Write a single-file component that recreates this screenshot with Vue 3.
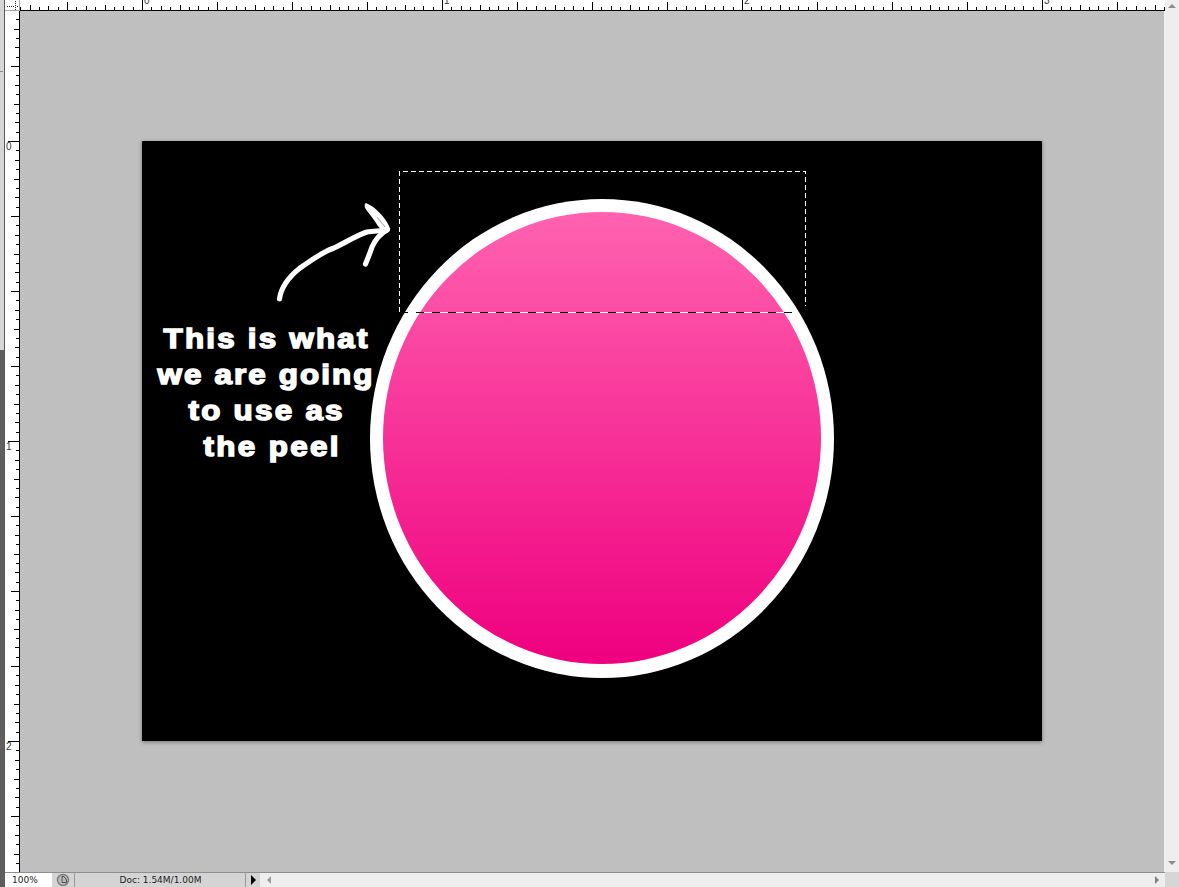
<script setup>
// Rulers: 300px to the inch, a tick every 1/32
const STEP = 300 / 32

function tickLength(i) {
  if (i % 32 === 0) return 11
  if (i % 8 === 0) return 8
  if (i % 4 === 0) return 5
  if (i % 2 === 0) return 4
  return 3
}

function buildTicks(origin, from, to) {
  const out = []
  const first = Math.ceil((from - origin) / STEP)
  const last = Math.floor((to - origin) / STEP)
  for (let i = first; i <= last; i++) {
    out.push({ at: Math.round(origin + i * STEP), len: tickLength(i) })
  }
  return out
}

const hTicks = buildTicks(142, 20, 1165)
const vTicks = buildTicks(141, 11, 872)
const hLabels = [{ x: 144, t: '0' }, { x: 444, t: '1' }, { x: 744, t: '2' }, { x: 1044, t: '3' }]
const vLabels = [{ y: 150, t: '0' }, { y: 450, t: '1' }, { y: 750, t: '2' }]

// Glyphs are stretched sideways to get closer to the heavy, wide face of the original
const WIDEN = 1.14
const caption = [
  { x: 163.5, y: 348, w: 204, t: 'This is what' },
  { x: 157.5, y: 384, w: 215, t: 'we are going' },
  { x: 188.5, y: 420, w: 154, t: 'to use as' },
  { x: 203.5, y: 456, w: 135, t: 'the peel' }
]
</script>

<template>
  <div class="window">
    <div class="edge"><span class="edge-notch"></span></div>

    <svg class="corner" width="15" height="11" viewBox="0 0 15 11" shape-rendering="crispEdges">
      <rect x="0" y="10" width="15" height="1" fill="#a8a8a8" />
      <rect x="14" y="0" width="1" height="11" fill="#a8a8a8" />
      <path d="M10 1v1M10 3v1M10 5v1M10 7v1M10 9v1M2 6h1M4 6h1M6 6h1M8 6h1M12 6h1" stroke="#222" />
    </svg>

    <svg class="ruler-top" width="1145" height="11" viewBox="20 0 1145 11" shape-rendering="crispEdges">
      <rect x="20" y="10" width="1145" height="1" fill="#000" />
      <rect v-for="t in hTicks" :key="t.at" :x="t.at" :y="10 - t.len" width="1" :height="t.len" fill="#000" />
      <text v-for="l in hLabels" :key="l.t" :x="l.x" y="4" class="ruler-num">{{ l.t }}</text>
    </svg>

    <div class="vscroll">
      <svg width="10" height="6" viewBox="0 0 10 6"><path d="M5 1 9 5H1z" fill="#8c8c8c" /></svg>
      <svg width="10" height="6" viewBox="0 0 10 6"><path d="M5 5 9 1H1z" fill="#8c8c8c" /></svg>
    </div>

    <svg class="ruler-left" width="15" height="861" viewBox="5 11 15 861" shape-rendering="crispEdges">
      <rect x="19" y="11" width="1" height="861" fill="#000" />
      <rect v-for="t in vTicks" :key="t.at" :x="19 - Math.min(t.len, 14)" :y="t.at" :width="t.len === 11 ? 14 : t.len" height="1" fill="#000" />
      <text v-for="l in vLabels" :key="l.t" x="6" :y="l.y" class="ruler-num">{{ l.t }}</text>
    </svg>

    <main class="canvas">
      <svg class="doc" width="900" height="600" viewBox="142 141 900 600">
        <defs>
          <linearGradient id="pink" x1="0" y1="0" x2="0" y2="1">
            <stop offset="0" stop-color="#ff62b0" />
            <stop offset="1" stop-color="#ef007f" />
          </linearGradient>
        </defs>
        <rect x="142" y="141" width="900" height="600" fill="#000" />
        <ellipse cx="602" cy="438.5" rx="232" ry="239.5" fill="#fff" />
        <ellipse cx="602" cy="438" rx="219" ry="226" fill="url(#pink)" />

        <g fill="none" stroke="#fff" stroke-linecap="round" stroke-linejoin="round">
          <path d="M279.500 299C281 287 290 276 300 268C312 260 322 252 334 248C345 243 355 236 367 232C374 231 381 231 387 230" stroke-width="5.200" />
          <path d="M387 230C380 234 375 240 372 247C370 253 368 258 365.500 264" stroke-width="5.200" />
          <path d="M366 204.500C372 207 384 216 389 229C386 232 382 230 378 224C374 217 369 212 366 207Z" fill="#fff" stroke-width="2.500" />
        </g>
        <path d="M377 217 385 227" stroke="#9a9a9a" fill="none" />

        <text
          v-for="line in caption"
          :key="line.t"
          :transform="`translate(${line.x} ${line.y}) scale(${WIDEN} 1)`"
          :textLength="line.w / WIDEN"
          lengthAdjust="spacing"
          class="caption"
        >{{ line.t }}</text>

        <g fill="none" shape-rendering="crispEdges">
          <path d="M399.500 312V171.500H805.500V306" stroke="#fff" stroke-dasharray="5 3" />
          <path d="M400 312.500H796" stroke="#fff" />
          <path d="M400 312.500H796" stroke="#000" stroke-dasharray="8 8" />
        </g>
      </svg>
    </main>

    <footer class="status">
      <div class="zoom">100%</div>
      <div class="timing">
        <svg width="14" height="14" viewBox="0 0 14 14">
          <circle cx="7" cy="7" r="5.500" fill="#bdbdbd" stroke="#7d7d7d" stroke-width="1.500" />
          <path d="M6 3.500V9.500H10.500V7L8 3.500Z" fill="none" stroke="#4d4d4d" />
        </svg>
      </div>
      <div class="doc-info">Doc: 1.54M/1.00M</div>
      <div class="info-arrow">
        <svg width="7" height="10" viewBox="0 0 7 10"><path d="M1 0 6 5 1 10z" fill="#000" /></svg>
      </div>
      <div class="hscroll">
        <svg width="6" height="10" viewBox="0 0 6 10"><path d="M1 5 5 1V9z" fill="#9a9a9a" /></svg>
        <svg width="6" height="10" viewBox="0 0 6 10"><path d="M5 5 1 1V9z" fill="#808080" /></svg>
      </div>
    </footer>
    <div class="grip"></div>
  </div>
</template>

<style scoped>
.window {
  display: grid;
  grid-template-columns: 5px 15px 1145px 14px;
  grid-template-rows: 11px 861px 15px;
  width: 1179px;
  height: 887px;
  overflow: hidden;
  background: #fff;
  font-family: "DejaVu Sans", "Liberation Sans", sans-serif;
}

.edge {
  grid-column: 1;
  grid-row: 1 / 4;
  position: relative;
  background: linear-gradient(#d6d6d6 350px, #5f5f5f 350px);
  border-right: 1px solid #5a5a5a;
  box-sizing: border-box;
}

.edge-notch {
  position: absolute;
  top: 71px;
  left: 0;
  width: 3px;
  height: 1px;
  background: #8a8a8a;
}

.corner,
.ruler-top,
.ruler-left {
  display: block;
  background: #fff;
}

.corner {
  grid-column: 2;
  grid-row: 1;
}

.ruler-top {
  grid-column: 3;
  grid-row: 1;
}

.ruler-left {
  grid-column: 2;
  grid-row: 2;
}

.ruler-num {
  font-family: "Liberation Sans", sans-serif;
  font-size: 10px;
  fill: #3a3440;
}

.vscroll {
  grid-column: 4;
  grid-row: 1 / 3;
  display: flex;
  flex-direction: column;
  justify-content: space-between;
  align-items: center;
  padding: 3px 0 6px;
  box-sizing: border-box;
  background: #eeeeee;
}

.canvas {
  grid-column: 3;
  grid-row: 2;
  display: flex;
  align-items: center;
  justify-content: center;
  padding: 0 1px 1px 0;
  background: #bfbfbf;
  border-right: 1px solid #f2f2f2;
  box-sizing: border-box;
}

.doc {
  display: block;
  flex: none;
  box-shadow: 0 1px 4px rgba(0, 0, 0, 0.4);
}

.caption {
  font-family: "Liberation Sans", Arial, sans-serif;
  font-size: 27.5px;
  font-weight: 700;
  fill: #fff;
  stroke: #fff;
  stroke-width: 1.5px;
}

.status {
  grid-column: 2 / 4;
  grid-row: 3;
  display: flex;
  align-items: stretch;
  border-top: 1px solid #8e8e8e;
  box-sizing: border-box;
  font-size: 9px;
  color: #1c1c1c;
}

.zoom {
  display: flex;
  align-items: center;
  width: 47px;
  padding-left: 7px;
  box-sizing: border-box;
  background: #fff;
  font-size: 9px;
}

.timing {
  display: flex;
  align-items: center;
  justify-content: center;
  width: 23px;
  box-sizing: border-box;
  background: #d4d4d4;
  border-right: 1px solid #9a9a9a;
}

.doc-info {
  display: flex;
  align-items: center;
  justify-content: center;
  width: 170px;
  padding-left: 1px;
  box-sizing: border-box;
  background: #d4d4d4;
}

.info-arrow {
  display: flex;
  align-items: center;
  justify-content: center;
  width: 15px;
  box-sizing: border-box;
  background: #d4d4d4;
  border-left: 1px solid #9a9a9a;
}

.hscroll {
  display: flex;
  flex: 1;
  align-items: center;
  justify-content: space-between;
  padding: 0 5px 0 6px;
  background: #eeeeee;
}

.grip {
  grid-column: 4;
  grid-row: 3;
  background: #d6d6d6;
}
</style>

<style>
html, body {
  margin: 0;
  overflow: hidden;
}
</style>
